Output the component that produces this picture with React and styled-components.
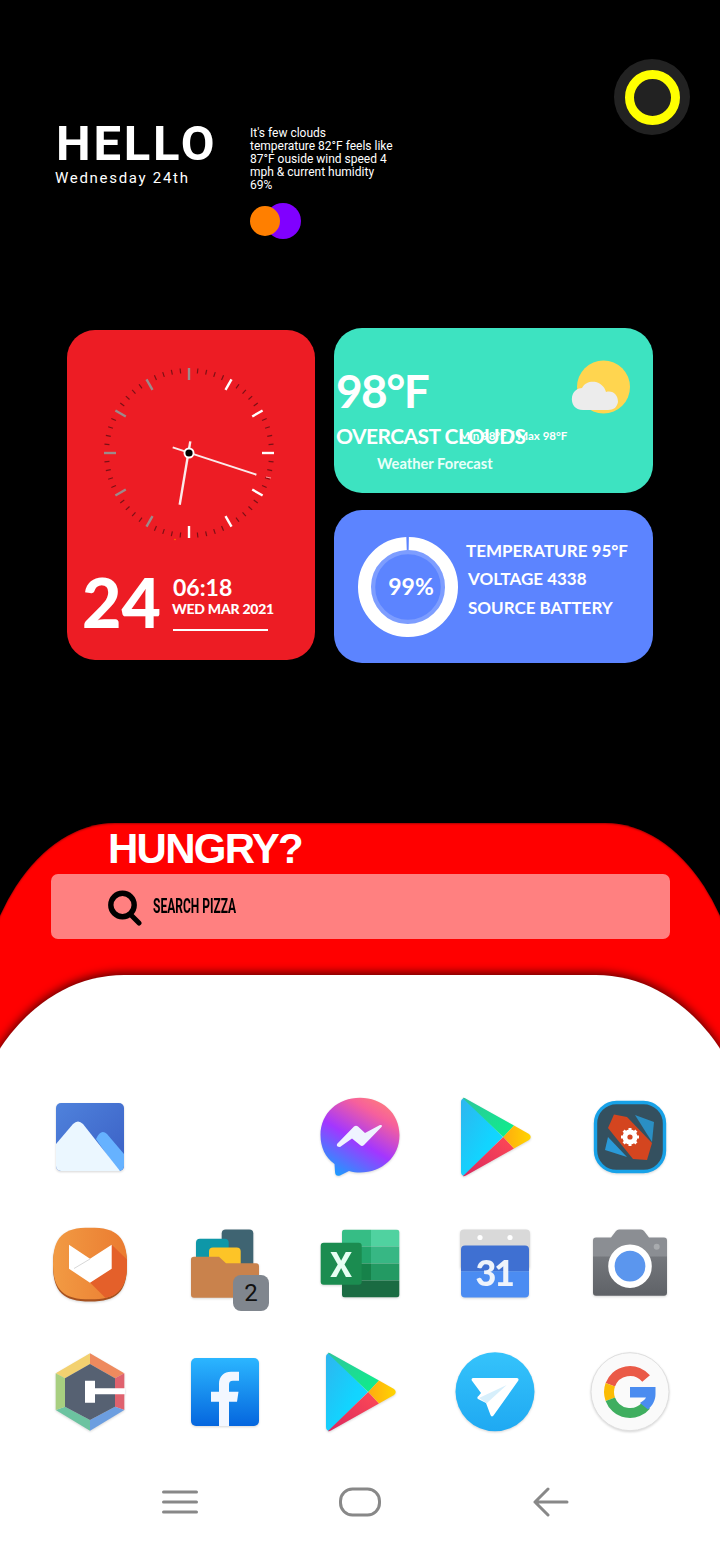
import styled, { createGlobalStyle } from "styled-components";

const GlobalStyle = createGlobalStyle`
  html, body {
    margin: 0;
    padding: 0;
    background: #000;
  }
`;

const Screen = styled.div`
  width: 720px;
  height: 1544px;
  background: #000;
  overflow: hidden;
  display: flex;
  flex-direction: column;
  font-family: "Roboto", "Liberation Sans", sans-serif;
`;

const TopRow = styled.section`
  display: flex;
  align-items: flex-start;
  height: 328px;
  padding: 59px 30px 0 55px;
  box-sizing: border-box;
`;

const Greeting = styled.div`
  width: 195px;
  margin-top: 57px;
  color: #fff;
`;

const Hello = styled.div`
  font-size: 49px;
  line-height: 56px;
  font-weight: 700;
  letter-spacing: 2.8px;
  margin-left: 1px;
`;

const DateLine = styled.div`
  font-size: 15px;
  line-height: 18px;
  font-weight: 400;
  letter-spacing: 1.7px;
  margin-top: -3px;
`;

const Forecast = styled.div`
  width: 150px;
  margin-top: 68px;
  color: #fff;
`;

const ForecastText = styled.p`
  margin: 0;
  font-size: 12px;
  line-height: 13px;
`;

const Dots = styled.div`
  display: flex;
  align-items: center;
  margin-top: 11px;
`;

const Dot = styled.span`
  display: block;
  width: ${(p) => p.$size}px;
  height: ${(p) => p.$size}px;
  border-radius: 50%;
  background: ${(p) => p.$color};
  margin-left: ${(p) => p.$overlap || 0}px;
  position: relative;
  z-index: ${(p) => p.$z || 0};
`;

const Status = styled.div`
  margin-left: auto;
  width: 76px;
  height: 76px;
  border-radius: 50%;
  background: #222;
  display: flex;
  align-items: center;
  justify-content: center;
`;

const StatusRing = styled.div`
  width: 37px;
  height: 37px;
  border-radius: 50%;
  border: 9px solid #ffff00;
`;

const Widgets = styled.section`
  display: flex;
  gap: 19px;
  padding-left: 67px;
`;

const ClockCard = styled.div`
  width: 248px;
  height: 330px;
  margin-top: 2px;
  background: #ed1c24;
  border-radius: 28px;
  color: #fff;
  font-family: "Lato", "Liberation Sans", sans-serif;
  display: flex;
  flex-direction: column;
`;

const ClockFace = styled.svg`
  display: block;
  width: 180px;
  height: 180px;
  margin: 33px 0 0 32px;
`;

const ClockFooter = styled.div`
  display: flex;
  margin: 31px 0 0 15px;
`;

const DayNumber = styled.div`
  width: 90px;
  margin-top: -2px;
  font-size: 68px;
  line-height: 60px;
  font-weight: 900;
`;

const TimeBlock = styled.div`
  width: 102px;
`;

const TimeText = styled.div`
  font-size: 23px;
  line-height: 24px;
  font-weight: 700;
  margin: 1px 0 0 1px;
`;

const DateText = styled.div`
  font-size: 14px;
  line-height: 18px;
  font-weight: 900;
  white-space: nowrap;
  margin-top: 1px;
  letter-spacing: -0.25px;
`;

const Underline = styled.div`
  width: 95px;
  height: 2px;
  background: #fff;
  margin: 11px 0 0 1px;
`;

const SideColumn = styled.div`
  width: 319px;
  display: flex;
  flex-direction: column;
  gap: 17px;
`;

const WeatherCard = styled.div`
  position: relative;
  height: 165px;
  background: #3de3c1;
  border-radius: 28px;
  color: #fff;
  font-family: "Lato", "Liberation Sans", sans-serif;
  display: flex;
`;

const WeatherText = styled.div`
  padding: 35px 0 0 2px;
  white-space: nowrap;
`;

const Temp = styled.div`
  font-size: 46px;
  line-height: 56px;
  font-weight: 700;
  letter-spacing: -1.6px;
`;

const Sky = styled.div`
  font-size: 21px;
  line-height: 26px;
  font-weight: 700;
  margin-top: 4px;
  letter-spacing: -0.55px;
`;

const ForecastLabel = styled.div`
  font-size: 14.7px;
  line-height: 18px;
  font-weight: 700;
  margin: 5px 0 0 41px;
  color: #e9fff9;
`;

const MinMax = styled.div`
  position: absolute;
  left: 125px;
  top: 101px;
  font-size: 11.5px;
  line-height: 14px;
  font-weight: 700;
  white-space: nowrap;
`;

const SunIcon = styled.svg`
  display: block;
  width: 60px;
  height: 60px;
  margin: 30px 23px 0 auto;
`;

const BatteryCard = styled.div`
  height: 153px;
  background: #5c84ff;
  border-radius: 28px;
  color: #fff;
  font-family: "Lato", "Liberation Sans", sans-serif;
  display: flex;
  align-items: center;
  padding-left: 24px;
`;

const BatteryRing = styled.svg`
  display: block;
  width: 100px;
  height: 100px;
  flex: none;
`;

const BatteryInfo = styled.div`
  margin: -14px 0 0 8px;
  font-size: 17px;
  font-weight: 700;
  line-height: 28.5px;
  white-space: nowrap;
`;

const InfoLine = styled.div`
  margin-left: ${(p) => p.$indent || 0}px;
`;

const RedPanel = styled.section`
  margin: 160px -25px 0;
  padding: 0 25px;
  flex: 1;
  background: #ff0000;
  border-radius: 140px 140px 0 0 / 216px 216px 0 0;
  display: flex;
  flex-direction: column;
  box-shadow: inset 0 1px 2px rgba(0, 0, 0, 0.35);
`;

const Hungry = styled.h2`
  margin: 0 0 0 108px;
  color: #fff;
  font-family: "Liberation Sans", sans-serif;
  font-size: 42px;
  line-height: 51px;
  font-weight: 700;
  letter-spacing: -1.75px;
`;

const SearchBar = styled.div`
  height: 65px;
  margin-left: 51px;
  margin-right: 50px;
  background: #ff8080;
  border-radius: 7px;
  display: flex;
  align-items: center;
  padding-left: 57px;
  color: #000;
`;

const SearchGlyph = styled.svg`
  display: block;
  width: 34px;
  height: 36px;
  flex: none;
  margin-top: 3px;
`;

const SearchLabel = styled.span`
  display: block;
  font-size: 20px;
  line-height: 22px;
  font-weight: 700;
  white-space: nowrap;
  margin: -2px 0 0 11px;
  transform: scaleX(0.6);
  transform-origin: left center;
`;

const Sheet = styled.div`
  flex: 1;
  margin: 36px -36px 0;
  padding: 122px 36px 0;
  background: #fff;
  border-radius: 160px 160px 0 0 / 200px 200px 0 0;
  box-shadow: 0 -2px 8px 1px rgba(60, 0, 0, 0.75);
`;

const AppGrid = styled.div`
  display: grid;
  grid-template-columns: repeat(5, 80px);
  grid-auto-rows: 80px;
  column-gap: 55px;
  row-gap: 47.5px;
  justify-content: center;
`;

const AppCell = styled.div`
  position: relative;
  width: 80px;
  height: 80px;
`;

const AppSvg = styled.svg`
  display: block;
  width: 80px;
  height: 80px;
  overflow: visible;
  filter: drop-shadow(0 1px 1px rgba(0, 0, 0, 0.16));
`;

const CountBadge = styled.span`
  position: absolute;
  left: 48px;
  top: 50px;
  width: 36px;
  height: 36px;
  border-radius: 8px;
  background: #80868e;
  color: #111;
  font-size: 24px;
  line-height: 36px;
  text-align: center;
`;

const NavBar = styled.nav`
  display: flex;
  align-items: center;
  height: 30px;
  margin-top: 55px;
  padding-left: 162px;
`;

const NavSvg = styled.svg`
  display: block;
  height: 30px;
  width: ${(p) => p.$w}px;
  margin-left: ${(p) => p.$gap || 0}px;
  flex: none;
`;

const ClockTicks = () => {
  const ticks = [];
  for (let i = 0; i < 60; i++) {
    const hour = i % 5 === 0;
    const grey = hour && (i === 0 || i >= 35);
    const inner = hour ? 73 : 80;
    const a = (i * 6 * Math.PI) / 180;
    const s = Math.sin(a);
    const c = Math.cos(a);
    ticks.push(
      <line
        key={i}
        x1={90 + s * inner}
        y1={90 - c * inner}
        x2={90 + s * 85}
        y2={90 - c * 85}
        stroke={hour ? (grey ? "#9c8a8b" : "#fff") : "#7c1015"}
        strokeWidth={hour ? 2.4 : 1.2}
      />
    );
  }
  return ticks;
};

const ClockDrawing = () => (
  <ClockFace viewBox="0 0 180 180">
    <ClockTicks />
    <line x1="167" y1="114" x2="172" y2="115" stroke="#f7b9b9" strokeWidth="0.8" />
    <circle cx="76" cy="176.5" r="0.8" fill="#ff7a00" />
    <line x1="91.3" y1="78.4" x2="80.7" y2="141.7" stroke="#fbeaea" strokeWidth="2.4" />
    <line x1="73.7" y1="84.4" x2="157.4" y2="111.7" stroke="#fbeaea" strokeWidth="2" />
    <circle cx="90" cy="90" r="5.5" fill="#fff" />
    <circle cx="90" cy="90" r="3.6" fill="#000" />
  </ClockFace>
);

const PlayIcon = ({ id }) => (
  <AppSvg viewBox="0 0 80 80">
    <defs>
      <linearGradient id={`${id}b`} x1="0" y1="0" x2="1" y2="1">
        <stop offset="0" stopColor="#2fb5ee" />
        <stop offset="0.6" stopColor="#12d4ff" />
        <stop offset="1" stopColor="#12dcff" />
      </linearGradient>
      <linearGradient id={`${id}g`} x1="0" y1="0" x2="1" y2="1">
        <stop offset="0" stopColor="#2fc59c" />
        <stop offset="1" stopColor="#0cf08a" />
      </linearGradient>
      <linearGradient id={`${id}o`} x1="0" y1="0" x2="1" y2="0">
        <stop offset="0" stopColor="#ffaa10" />
        <stop offset="1" stopColor="#ffd500" />
      </linearGradient>
      <linearGradient id={`${id}r`} x1="1" y1="0" x2="0" y2="1">
        <stop offset="0" stopColor="#ff4a55" />
        <stop offset="1" stopColor="#d9285f" />
      </linearGradient>
    </defs>
    <path d="M6 5 Q6 1 10 1.5 L48 40 L9 79 Q6 78 6 75 Z" fill={`url(#${id}b)`} />
    <path d="M7.5 1 Q9 0.5 11 1.7 L59 28.5 L48.3 40 Z" fill={`url(#${id}g)`} />
    <path d="M48.3 40 L59 51.5 L11 78.5 Q9 79.7 8 79 Z" fill={`url(#${id}r)`} />
    <path d="M48.3 40 L59 28.5 L74 37 Q77.5 40 74 43 L59 51.5 Z" fill={`url(#${id}o)`} />
  </AppSvg>
);

const PhotosIcon = () => (
  <AppSvg viewBox="0 0 80 80">
    <defs>
      <linearGradient id="ph" x1="0" y1="0" x2="1" y2="1">
        <stop offset="0" stopColor="#4f82dc" />
        <stop offset="1" stopColor="#3a5fc4" />
      </linearGradient>
      <clipPath id="phc">
        <rect x="6" y="6" width="68" height="68" rx="5" />
      </clipPath>
    </defs>
    <g clipPath="url(#phc)">
      <rect x="6" y="6" width="68" height="68" fill="url(#ph)" />
      <path d="M46 42 Q51 31 57 37 L74 57 V74 H68 Z" fill="#66b2ff" />
      <path d="M6 47 L23 27 Q28 22 33 27 L70 74 H6 Z" fill="#ebf7ff" />
    </g>
  </AppSvg>
);

const MessengerIcon = () => (
  <AppSvg viewBox="0 0 80 80">
    <defs>
      <linearGradient id="ms" x1="0.2" y1="1" x2="0.8" y2="0">
        <stop offset="0" stopColor="#1a9dff" />
        <stop offset="0.45" stopColor="#a336ff" />
        <stop offset="0.8" stopColor="#f6609c" />
        <stop offset="1" stopColor="#ff7f7a" />
      </linearGradient>
    </defs>
    <path
      d="M40 0.7 C62 0.7 79.5 16 79.5 38 C79.5 60 62 75.5 40 75.5 C36 75.5 33 75 29 74 L20 78.5 Q15.5 80 15 75 L14.5 67 C5 60 0.5 50 0.5 38 C0.5 16 18 0.7 40 0.7 Z"
      fill="url(#ms)"
    />
    <path d="M17 47 L34 29.5 Q36 28 38 29.5 L45 36 L60 28 Q63 27.5 61.5 30 L44 48 Q42 50 40 48 L32 41.5 L20 50 Q16 50 17 47 Z" fill="#eff3ff" />
  </AppSvg>
);

const NovaIcon = () => (
  <AppSvg viewBox="0 0 80 80">
    <rect x="5.5" y="5.5" width="69" height="69" rx="21" fill="#34505f" stroke="#18a2e8" strokeWidth="3.4" />
    <path d="M45 18 L64 25 L62 45 Z" fill="#2a8fc4" />
    <path d="M18 40 L15 53 L37 60 Z" fill="#2a9ad8" />
    <path d="M24 17.5 L37 20 L62 46 L57 63 L43 62 L18 31 Z" fill="#d4451f" />
    <circle cx="40" cy="40" r="7.5" fill="#fff" />
    <g fill="#fff">
      <rect x="38.5" y="31" width="3" height="18" />
      <rect x="31" y="38.5" width="18" height="3" />
      <rect x="38.5" y="31" width="3" height="18" transform="rotate(45 40 40)" />
      <rect x="31" y="38.5" width="18" height="3" transform="rotate(45 40 40)" />
    </g>
    <circle cx="40" cy="40" r="2.6" fill="#d4451f" />
  </AppSvg>
);

const AptoideIcon = () => (
  <AppSvg viewBox="0 0.5 80 80">
    <defs>
      <linearGradient id="ap" x1="0" y1="0" x2="1" y2="0">
        <stop offset="0" stopColor="#f29c44" />
        <stop offset="1" stopColor="#ea7a30" />
      </linearGradient>
      <clipPath id="apc">
        <path d="M40 3 C67 3 77 13 77 39 C77 65 67 75 40 75 C13 75 3 65 3 39 C3 13 13 3 40 3 Z" />
      </clipPath>
    </defs>
    <path d="M40 5 C67 5 77 15 77 41 C77 67 67 77 40 77 C13 77 3 67 3 41 C3 15 13 5 40 5 Z" fill="#a6511f" />
    <g clipPath="url(#apc)">
      <rect x="0" y="0" width="80" height="80" fill="url(#ap)" />
      <path d="M61.7 20.3 L80 38 V80 H62 L38 56 Z" fill="#e4602a" />
    </g>
    <path d="M19 20.3 L40 34.3 L61.7 20.3 V44.3 L40 58.3 L19 44.3 Z" fill="#fff" />
    <line x1="24" y1="44" x2="40" y2="34.5" stroke="#d8d8d8" strokeWidth="1" />
  </AppSvg>
);

const FilesIcon = () => (
  <AppCell>
    <AppSvg viewBox="0 0.5 80 80">
      <rect x="36.7" y="5" width="31.6" height="44" rx="4" fill="#3f6472" />
      <rect x="11" y="14.3" width="32.7" height="30" rx="4" fill="#0e97a8" />
      <rect x="24" y="23" width="31.7" height="28" rx="4" fill="#fdc427" />
      <path d="M9 32.3 H34 L41 38.7 H71 Q74 38.7 74 42 V70 Q74 73.3 71 73.3 H9 Q6 73.3 6 70 V35 Q6 32.3 9 32.3 Z" fill="#c9824c" />
    </AppSvg>
    <CountBadge>2</CountBadge>
  </AppCell>
);

const ExcelIcon = () => (
  <AppSvg viewBox="0 1.5 80 80">
    <defs>
      <clipPath id="xl">
        <rect x="22" y="6" width="57.3" height="68" rx="3" />
      </clipPath>
    </defs>
    <g clipPath="url(#xl)">
      <rect x="22" y="6" width="29" height="17" fill="#36bd85" />
      <rect x="51" y="6" width="29" height="17" fill="#50d2a0" />
      <rect x="22" y="23" width="29" height="17" fill="#23a56c" />
      <rect x="51" y="23" width="29" height="17" fill="#37b784" />
      <rect x="22" y="40" width="29" height="17" fill="#16824a" />
      <rect x="51" y="40" width="29" height="17" fill="#239a63" />
      <rect x="22" y="57" width="58" height="17" fill="#1a6b42" />
    </g>
    <rect x="0.7" y="19.3" width="41" height="42" rx="3" fill="#1b8c50" />
    <text x="21" y="53" textAnchor="middle" fontFamily="Roboto, sans-serif" fontWeight="700" fontSize="35" fill="#e6fff3">
      X
    </text>
  </AppSvg>
);

const CalendarIcon = () => (
  <AppSvg viewBox="0 1.5 80 80">
    <rect x="5" y="6" width="70" height="40" rx="4" fill="#d9d9d9" />
    <circle cx="25" cy="14" r="2.6" fill="#fff" />
    <circle cx="55" cy="14" r="2.6" fill="#fff" />
    <path d="M6 26 Q6 22 10 22 H70 Q74 22 74 26 V48 H6 Z" fill="#3f70d2" />
    <path d="M6 47.7 H74 V70 Q74 74 70 74 H10 Q6 74 6 70 Z" fill="#4b8cf2" />
    <text x="39" y="62" textAnchor="middle" fontFamily="Lato, sans-serif" fontWeight="900" fontSize="36" letterSpacing="-2.5" fill="#eef3fb">
      31
    </text>
  </AppSvg>
);

const CameraIcon = () => (
  <AppSvg viewBox="0 1.5 80 80">
    <defs>
      <linearGradient id="cm" x1="0" y1="0" x2="0" y2="1">
        <stop offset="0" stopColor="#74777c" />
        <stop offset="1" stopColor="#5f6267" />
      </linearGradient>
    </defs>
    <path d="M6 14 H21 L26 7.5 Q27 6 29 6 H51 Q53 6 54 7.5 L59 14 H74 Q77 14 77 17 V34 H3 V17 Q3 14 6 14 Z" fill="#8b8e93" />
    <path d="M3 33 H77 V69 Q77 72.3 74 72.3 H6 Q3 72.3 3 69 Z" fill="url(#cm)" />
    <circle cx="40" cy="42.7" r="18.6" fill="#5b96ee" stroke="#fff" strokeWidth="6.4" />
    <circle cx="66.7" cy="23.3" r="3" fill="#a8abae" />
  </AppSvg>
);

const HexIcon = () => (
  <AppSvg viewBox="0 0 80 80">
    <path d="M40 1.3 L40 12 L15 26.3 L5.7 21.3 Z" fill="#f3d170" />
    <path d="M40 1.3 L74.3 21.3 L65 26.3 L40 12 Z" fill="#ee8a5e" />
    <path d="M74.3 21.3 V58 L65 54.7 V26.3 Z" fill="#df626e" />
    <path d="M74.3 58 L40 78.7 L40 68 L65 54.7 Z" fill="#6c9ee0" />
    <path d="M40 78.7 L5.7 58 L15 54.7 L40 68 Z" fill="#6cc3a0" />
    <path d="M5.7 58 V21.3 L15 26.3 V54.7 Z" fill="#a8cf80" />
    <path d="M40 12 L65 26.3 V54.7 L40 68 L15 54.7 V26.3 Z" fill="#566172" />
    <path d="M35 28.7 H45 V36.3 H75 V42.3 H45 V50.7 H35 Z" fill="#fff" />
  </AppSvg>
);

const FacebookIcon = () => (
  <AppSvg viewBox="0 0 80 80">
    <defs>
      <linearGradient id="fb" x1="0" y1="0" x2="0" y2="1">
        <stop offset="0" stopColor="#2bb6ff" />
        <stop offset="1" stopColor="#0566de" />
      </linearGradient>
    </defs>
    <rect x="6" y="6" width="68" height="68" rx="5" fill="url(#fb)" />
    <path d="M34 74 V49.7 H26 V39.7 H34 V32 C34 24 39 19.7 46 19.7 H54 V28.7 H48 C45 28.7 44 30 44 33 V39.7 H53.5 L52 49.7 H44 V74 Z" fill="#f3f7ff" />
  </AppSvg>
);

const PlaneIcon = () => (
  <AppSvg viewBox="0 0 80 80">
    <defs>
      <linearGradient id="pl" x1="0" y1="0" x2="0" y2="1">
        <stop offset="0" stopColor="#35c3fb" />
        <stop offset="1" stopColor="#1fa9f2" />
      </linearGradient>
    </defs>
    <circle cx="40" cy="39.7" r="39.5" fill="url(#pl)" />
    <path d="M18 26 H62 Q64.5 26.5 63 29 L38.5 63.5 Q36.5 65.5 35.5 63 L31 51 L23 47 Q21.5 45.5 23.5 44 L26 41 L16.8 28.5 Q16 26.5 18 26 Z" fill="#fff" />
    <path d="M24 46 L51.7 33 L31.7 51.3 Z" fill="#d7effb" />
  </AppSvg>
);

const GoogleIcon = () => (
  <AppSvg viewBox="0 0 80 80">
    <circle cx="40" cy="39.7" r="39" fill="#fafafa" stroke="#dedede" strokeWidth="1" />
    <g fill="none" strokeWidth="10">
      <path d="M56.1 26.5 A21 21 0 0 0 20.3 32.8" stroke="#ea5a47" />
      <path d="M20.3 32.8 A21 21 0 0 0 20.3 47.2" stroke="#fbbc05" />
      <path d="M20.3 47.2 A21 21 0 0 0 56.1 53.5" stroke="#3fae5f" />
    </g>
    <path d="M40 35 H65.5 V42 C65.5 48 63 53 58 57.5 L50 51 C53 49 55 47.5 56 45.5 H40 Z" fill="#4a8cf0" />
  </AppSvg>
);

export default function App() {
  return (
    <>
      <GlobalStyle />
      <Screen>
        <TopRow>
          <Greeting>
            <Hello>HELLO</Hello>
            <DateLine>Wednesday 24th</DateLine>
          </Greeting>
          <Forecast>
            <ForecastText>
              It's few clouds
              <br />
              temperature 82°F feels like
              <br />
              87°F ouside wind speed 4
              <br />
              mph &amp; current humidity
              <br />
              69%
            </ForecastText>
            <Dots>
              <Dot $size={30} $color="#ff7f00" $z={1} />
              <Dot $size={36} $color="#8000ff" $overlap={-15} />
            </Dots>
          </Forecast>
          <Status>
            <StatusRing />
          </Status>
        </TopRow>

        <Widgets>
          <ClockCard>
            <ClockDrawing />
            <ClockFooter>
              <DayNumber>24</DayNumber>
              <TimeBlock>
                <TimeText>06:18</TimeText>
                <DateText>WED MAR 2021</DateText>
                <Underline />
              </TimeBlock>
            </ClockFooter>
          </ClockCard>

          <SideColumn>
            <WeatherCard>
              <WeatherText>
                <Temp>98°F</Temp>
                <Sky>OVERCAST CLOUDS</Sky>
                <ForecastLabel>Weather Forecast</ForecastLabel>
              </WeatherText>
              <MinMax>Min 98°F / Max 98°F</MinMax>
              <SunIcon viewBox="0 0 60 60">
                <circle cx="33.5" cy="29" r="26.5" fill="#ffd54f" />
                <path d="M11 47 C3 47 -1 41 0 34 C1 28 6 25 10 25 C13 19 19 18 24 19 C30 21 33 25 34 29 C41 27 46 32 46 39 C45 44 42 47 36 47 Z" fill="#ececec" transform="translate(2 5)" />
              </SunIcon>
            </WeatherCard>

            <BatteryCard>
              <BatteryRing viewBox="0 0 100 100">
                <circle cx="50" cy="50" r="35" fill="none" stroke="#7d9dff" strokeWidth="4.4" />
                <circle
                  cx="50"
                  cy="50"
                  r="43.5"
                  fill="none"
                  stroke="#fff"
                  strokeWidth="13"
                  strokeDasharray="270.6 2.7"
                  transform="rotate(-89 50 50)"
                />
                <text x="53" y="58" textAnchor="middle" fontFamily="Lato, sans-serif" fontWeight="700" fontSize="23" fill="#fff">
                  99%
                </text>
              </BatteryRing>
              <BatteryInfo>
                <InfoLine>TEMPERATURE 95°F</InfoLine>
                <InfoLine $indent={2}>VOLTAGE 4338</InfoLine>
                <InfoLine $indent={2}>SOURCE BATTERY</InfoLine>
              </BatteryInfo>
            </BatteryCard>
          </SideColumn>
        </Widgets>

        <RedPanel>
          <Hungry>HUNGRY?</Hungry>
          <SearchBar>
            <SearchGlyph viewBox="0 0 34 36">
              <circle cx="14.5" cy="15" r="11.7" fill="none" stroke="#000" strokeWidth="5.4" />
              <line x1="23" y1="25" x2="31" y2="33" stroke="#000" strokeWidth="5" strokeLinecap="round" />
            </SearchGlyph>
            <SearchLabel>SEARCH PIZZA</SearchLabel>
          </SearchBar>

          <Sheet>
            <AppGrid>
              <PhotosIcon />
              <AppCell />
              <MessengerIcon />
              <PlayIcon id="pa" />
              <NovaIcon />
              <AptoideIcon />
              <FilesIcon />
              <ExcelIcon />
              <CalendarIcon />
              <CameraIcon />
              <HexIcon />
              <FacebookIcon />
              <PlayIcon id="pb" />
              <PlaneIcon />
              <GoogleIcon />
            </AppGrid>

            <NavBar>
              <NavSvg $w={36} viewBox="0 0 36 30">
                <path d="M1.5 5 H34.5 M1.5 15 H34.5 M1.5 25 H34.5" stroke="#888" strokeWidth="3" strokeLinecap="round" />
              </NavSvg>
              <NavSvg $w={42} $gap={141} viewBox="0 0 42 30">
                <rect x="1.5" y="2" width="39" height="26" rx="12" fill="none" stroke="#888" strokeWidth="3" />
              </NavSvg>
              <NavSvg $w={36} $gap={152} viewBox="0 0 36 30">
                <path d="M34 15 H2 M15 2 L2 15 L15 28" fill="none" stroke="#888" strokeWidth="3" strokeLinecap="round" strokeLinejoin="round" />
              </NavSvg>
            </NavBar>
          </Sheet>
        </RedPanel>
      </Screen>
    </>
  );
}
